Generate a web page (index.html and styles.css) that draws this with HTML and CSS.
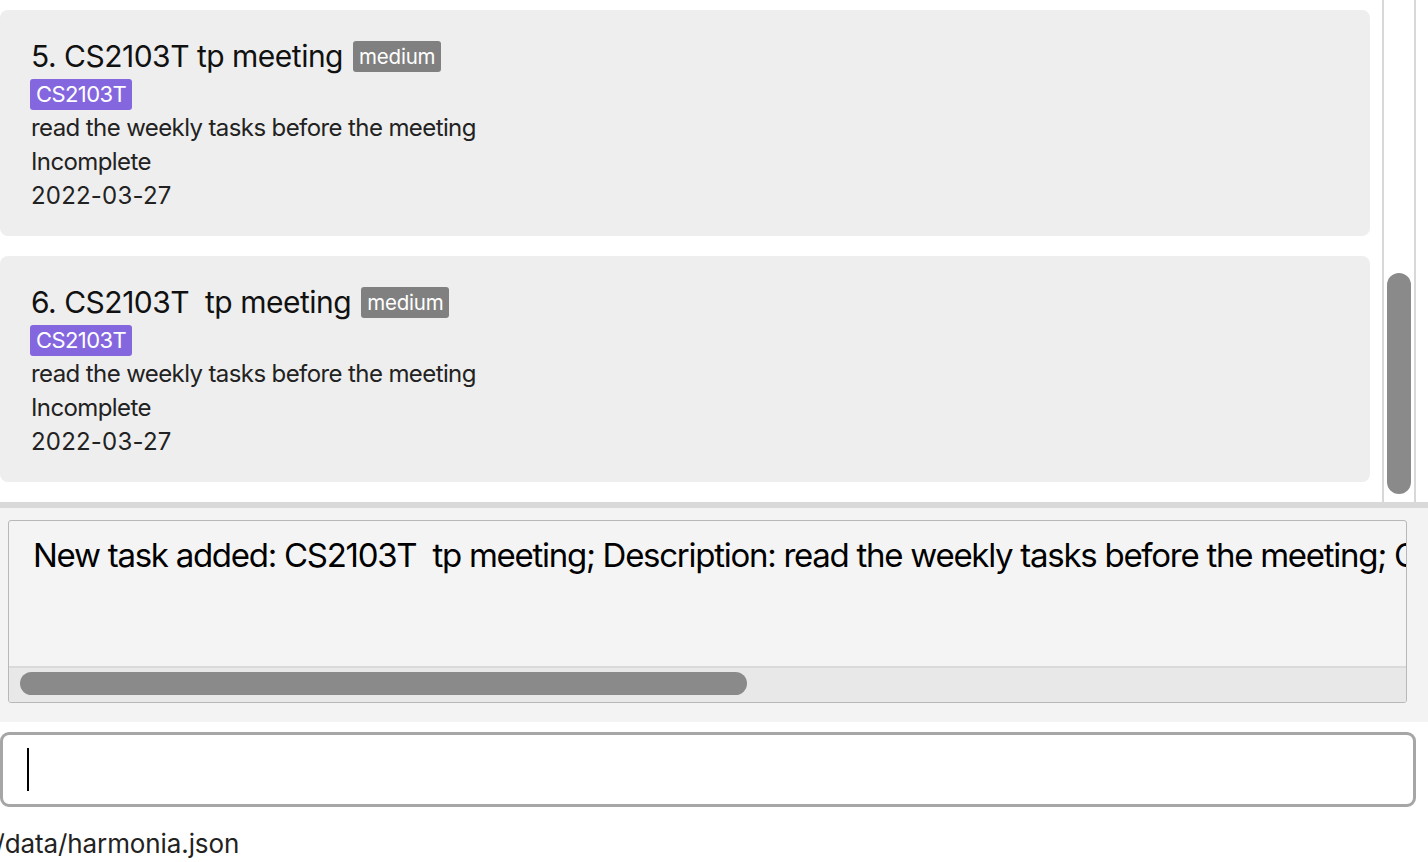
FILE: index.html
```html
<!DOCTYPE html>
<html>
<head>
<meta charset="utf-8">
<link rel="stylesheet" href="styles.css">
</head>
<body>
<div class="app">
  <div class="list-panel">
    <div class="list">
      <div class="card">
        <div class="title-row"><span class="title">5. CS2103T tp meeting</span><span class="priority">medium</span></div>
        <div class="tags"><span class="tag">CS2103T</span></div>
        <div class="line desc">read the weekly tasks before the meeting</div>
        <div class="line">Incomplete</div>
        <div class="line date">2022-03-27</div>
      </div>
      <div class="card">
        <div class="title-row"><span class="title">6. CS2103T&nbsp; tp meeting</span><span class="priority">medium</span></div>
        <div class="tags"><span class="tag">CS2103T</span></div>
        <div class="line desc">read the weekly tasks before the meeting</div>
        <div class="line">Incomplete</div>
        <div class="line date">2022-03-27</div>
      </div>
    </div>
    <div class="vscroll"><div class="vthumb"></div></div>
  </div>
  <div class="divider"></div>
  <div class="result-area">
    <div class="result-box">
      <div class="result-text">New task added: CS2103T&nbsp; tp meeting; Description: read the weekly tasks before the meeting; Completion: Incomplete</div>
      <div class="hscroll"><div class="hthumb"></div></div>
    </div>
  </div>
  <div class="command-area">
    <div class="command-box"><span class="caret"></span></div>
  </div>
  <div class="status">./data/harmonia.json</div>
</div>
</body>
</html>
```
FILE: styles.css
```css
html, body {
  margin: 0;
  padding: 0;
  background: #ffffff;
}
body {
  width: 1428px;
  height: 862px;
  overflow: hidden;
  font-family: "Inter", "Liberation Sans", sans-serif;
}
.app {
  display: flex;
  flex-direction: column;
}
.list-panel {
  display: flex;
  height: 502px;
  overflow: hidden;
}
.list {
  width: 1382px;
  padding-top: 10px;
  display: flex;
  flex-direction: column;
  gap: 20px;
}
.card {
  width: 1370px;
  height: 226px;
  box-sizing: border-box;
  background: #eeeeee;
  border-radius: 8px;
  padding: 26px 0 0 31px;
}
.title-row {
  display: flex;
  align-items: center;
  height: 40px;
}
.title {
  font-size: 30px;
  color: #111;
  letter-spacing: -0.5px;
}
.priority {
  margin-left: 10px;
  background: #808080;
  color: #fff;
  font-size: 20.5px;
  border-radius: 3px;
  padding: 0 6px;
  height: 31px;
  line-height: 31px;
  letter-spacing: -0.2px;
}
.tags {
  display: flex;
  margin-top: 3px;
}
.tag {
  background: #8467df;
  color: #fff;
  font-size: 22px;
  border-radius: 3px;
  padding: 0 6px;
  margin-left: -1px;
  height: 31px;
  line-height: 31px;
  letter-spacing: -0.6px;
}
.line {
  font-size: 24px;
  color: #222;
  height: 34px;
  line-height: 34px;
  letter-spacing: -0.6px;
}
.date {
  letter-spacing: 0.2px;
}
.desc {
  margin-top: 1px;
}
.vscroll {
  width: 30px;
  height: 502px;
  border-left: 2px solid #d8d8d8;
  border-right: 2px solid #d8d8d8;
  box-sizing: content-box;
  display: flex;
  justify-content: center;
}
.vthumb {
  margin-top: 273px;
  width: 24px;
  height: 221px;
  border-radius: 12px;
  background: #8a8a8a;
}
.divider {
  height: 6px;
  background: #d9d9d9;
}
.result-area {
  height: 214px;
  background: #f3f3f3;
  box-sizing: border-box;
  padding: 12px 0 0 8px;
}
.result-box {
  width: 1399px;
  height: 183px;
  box-sizing: border-box;
  border: 1px solid #b8b8b8;
  border-radius: 3px;
  background: #f4f4f4;
  display: flex;
  flex-direction: column;
  overflow: hidden;
}
.result-text {
  flex: 1;
  white-space: nowrap;
  overflow: hidden;
  font-size: 33px;
  color: #000;
  padding: 14px 0 0 24px;
  line-height: 40px;
  letter-spacing: -1.27px;
}
.hscroll {
  height: 36px;
  box-sizing: border-box;
  background: #e8e8e8;
  border-top: 2px solid #dadada;
  padding: 4px 0 0 11px;
}
.hthumb {
  width: 727px;
  height: 23px;
  border-radius: 12px;
  background: #8a8a8a;
}
.command-area {
  padding-top: 10px;
}
.command-box {
  width: 1416px;
  height: 75px;
  box-sizing: border-box;
  border: 3px solid #a6a6a6;
  border-radius: 9px;
  background: #fff;
  padding: 13px 0 0 24px;
}
.caret {
  display: block;
  width: 2px;
  height: 43px;
  background: #000;
}
.status {
  margin-top: 20px;
  margin-left: -12px;
  font-size: 26px;
  color: #222;
  line-height: 34px;
  letter-spacing: -0.1px;
}
```
